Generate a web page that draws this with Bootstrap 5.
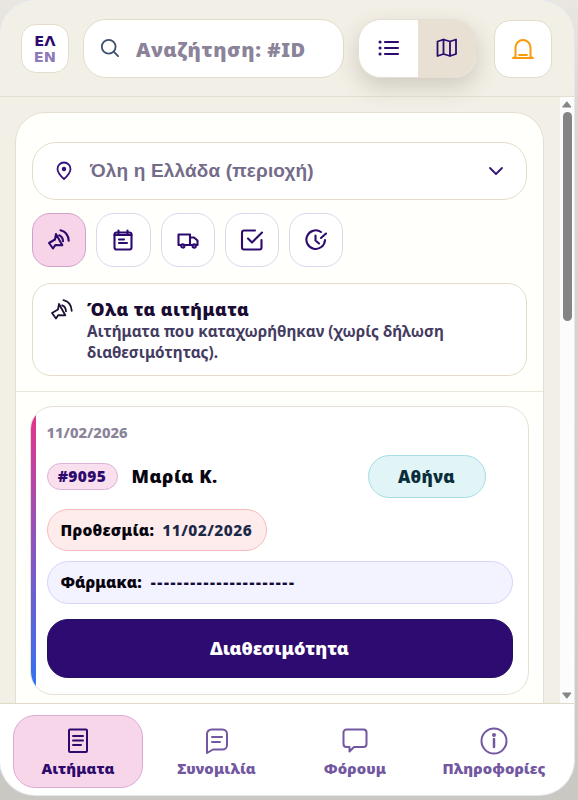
<!DOCTYPE html>
<html lang="el">
<head>
<meta charset="utf-8">
<meta name="viewport" content="width=device-width, initial-scale=1">
<title>Αιτήματα</title>
<link href="https://cdn.jsdelivr.net/npm/bootstrap@5.3.0/dist/css/bootstrap.min.css" rel="stylesheet">
<style>
*{box-sizing:border-box}
body{height:800px;width:578px;font-family:"Noto Sans","Open Sans",sans-serif;background:linear-gradient(180deg,#e9e7df 0,#dad8d0 14%,#d6d1cb 65%,#cac8c2 100%);color:#1c1038}
.shell{width:574px;height:795px;border-radius:35px;background:#f2efe6;overflow:hidden;box-shadow:0 0 0 1px #e3e7ee}
.topbar{height:97px;border-bottom:1px solid #e5dfd1;padding:0 22px 0 21px;flex:none}
.tile{background:#fff;border:1px solid #e3dccb}
.lang{width:48px;height:49px;border-radius:15px;font:700 14.6px/16px "DejaVu Sans",sans-serif;color:#2d0a6e;margin-right:14px;padding-top:1px}
.lang .off{color:#8e78b8}
.search{width:262px;height:59px;border-radius:23px;margin-right:14px;padding-left:16px;color:#3f4f70}
.search .hint{font-size:20px;font-weight:900;letter-spacing:.6px;color:#8b8399;margin:3px 0 0 16px}
.toggle{width:119px;height:59px;border-radius:23px;overflow:hidden;margin-right:17px;box-shadow:0 9px 22px rgba(70,60,40,.2);border:1px solid #e5dfd1;color:#2d0a6e}
.toggle div{flex:1}
.toggle .alt{background:#e7e0d3}
.bell{width:58px;height:58px;border-radius:16px;color:#f99a0c;margin-top:1px}
.main{height:606px;padding-left:15px;flex:none;overflow:hidden}
.panel{width:529px;height:620px;margin-top:15px;border:1px solid #e5dfd1;border-radius:30px 30px 0 0;background:#fffffc}
.upper{height:279px;padding:29px 16px 0;border-bottom:1px solid #ebe7dc}
.region{height:58px;border-radius:24px;padding:0 21px 0 21px;color:#37127a}
.region .label{font-family:"Liberation Sans",sans-serif;font-size:19px;font-weight:700;letter-spacing:.15px;color:#746c89;margin:1px 0 0 16px}
.filters{gap:10px;margin-top:13px}
.filter{width:54.3px;height:54px;border-radius:18px;border:1px solid #dcd7ec;background:#fff;color:#2d0a6e}
.filter.on{background:#f8d4e8;border-color:#cfa0cd}
.info{height:93px;margin-top:16px;border-radius:19px;padding:14px 17px}
.info .txt{margin-left:13px}
.info .ttl{font-size:17.5px;font-weight:900;letter-spacing:.45px;line-height:23px;color:#190b32}
.info .desc{font-size:15.3px;font-weight:700;line-height:20.5px;color:#443b61}
.request{width:499px;height:289px;margin:13.500px 0 0 14px;border-radius:23px;overflow:hidden;background:#fff;border:1px solid #e6e1d4}
.stripe{width:5px;flex:none;background:linear-gradient(#e93289,#9153bc 45%,#2c74f4)}
.content{padding:14px 15.500px 0 10.500px}
.date{font-size:14.8px;font-weight:800;color:#8b8399;line-height:22px}
.person{margin-top:12px;height:44px}
.num{width:71px;height:27px;border-radius:14px;background:#fae0ee;border:1px solid #dcb2d8;font-size:15.5px;font-weight:900;letter-spacing:.4px;color:#2d0a6e}
.who{font-size:18px;font-weight:900;letter-spacing:.5px;color:#080610;margin-left:14px}
.city{width:118px;height:43.500px;border-radius:22px;background:#e1f4f6;border:1px solid #a4dde4;font-size:17px;font-weight:900;letter-spacing:.3px;color:#092e3b;margin-left:auto;margin-right:27px}
.line{height:43px;border-radius:22px;padding:2px 14px 0 13px;font-size:15.5px;font-weight:900;white-space:pre;color:#07040d}
.due{width:220px;height:42px;margin-top:10px;background:#fdeceb;border:1px solid #f5bcbc}
.due .val{color:#1b2948;margin-left:8px;font-weight:800;letter-spacing:.5px}
.due .key{letter-spacing:.25px}
.meds{margin-top:10px;background:#f3f2ff;border:1px solid #d5d2fc}
.meds .val{margin-left:9px;letter-spacing:1.65px;color:#120a38}
.offer{height:59px;border-radius:21px;margin-top:15px;background:#2e0b70;color:#fff;font-size:18px;font-weight:900;border:1px solid #251064}
.scroll{width:14px;background:#fcfcfc;color:#848484}
.scroll .thumb{width:9px;height:209px;border-radius:5px;background:#848484;margin-top:4px}
.tabs{height:92px;background:#fff;border-top:1px solid #e0d9c8;padding:11px 0 0 13px}
.tab{height:73px;border-radius:22px;border:1px solid transparent;color:#7257a1;font-size:14.8px;font-weight:900;line-height:20px;padding-top:11px}
.tab span{letter-spacing:.1px}
.tab.on{background:#f8d6e9;border-color:#dca9d3;color:#2d0a6e}
.w131{width:130px}.w147{width:147px}.w130{width:130px}.w148{width:148px}
svg{flex:none;fill:none;stroke:currentColor;stroke-width:1.8;stroke-linecap:round;stroke-linejoin:round;display:block}
.tab svg{margin-bottom:3px;stroke-width:2}
.thick{stroke-width:2.1}
span,.ttl,.desc,.date{white-space:nowrap}
</style>
</head>
<body>
<svg width="0" height="0" class="position-absolute"><defs>
<g id="horn"><path d="M9 6 15.300 17.300 8.300 17.100 6 20.500 2 15 8 11.500Z"/><path d="M12.200 7.300q3.700 1.600 3.800 6M13.500 2.200q7.800 1.800 8.200 10.600"/></g>
</defs></svg>
<div class="shell d-flex flex-column">
  <header class="topbar d-flex align-items-center">
    <div class="tile lang d-flex flex-column align-items-center justify-content-center"><span>ΕΛ</span><span class="off">EN</span></div>
    <div class="tile search d-flex align-items-center"><svg width="20" height="20" viewBox="0 0 20 20"><circle cx="8.700" cy="8.700" r="6.900"/><path d="m13.700 13.700 4.400 4.400"/></svg><span class="hint">Αναζήτηση: #ID</span></div>
    <div class="toggle d-flex">
      <div class="bg-white d-flex align-items-center justify-content-center"><svg class="thick" width="22" height="20" viewBox="0 0 22 18"><path d="M7 3H20M7 9H20M7 15H20"/><path d="M2 3h.1M2 9h.1M2 15h.1" style="stroke-width:3"/></svg></div>
      <div class="alt d-flex align-items-center justify-content-center"><svg width="22" height="20" viewBox="0 0 22 19"><path d="m1.500 3 6-2 6.500 2 6-2v14.500l-6 2-6.500-2-6 2zM7.500 1v14.500M14 3v14.500"/></svg></div>
    </div>
    <div class="tile bell d-flex align-items-center justify-content-center"><svg width="24" height="22" viewBox="0 0 24 22"><path d="M4.500 18.500V9.500a7.500 7.500 0 0 1 15 0v9l2.500 1.500H2Z" style="stroke-width:2"/><path d="M8 17h8"/></svg></div>
  </header>
  <main class="main d-flex justify-content-between">
    <section class="panel">
      <div class="upper">
        <div class="tile region d-flex align-items-center"><svg width="20" height="22" viewBox="0 0 20 22"><path d="M10 19C6 15.500 3.500 12.500 3.500 9a6.500 6.500 0 0 1 13 0c0 3.500-2.500 6.500-6.500 10Z"/><circle cx="10" cy="9" r="1.300" fill="currentColor"/></svg><span class="label">Όλη η Ελλάδα (περιοχή)</span><svg class="ms-auto" width="18" height="18" viewBox="0 0 18 18"><path d="m3 6 6 6 6-6"/></svg></div>
        <div class="filters d-flex">
          <div class="filter on d-flex align-items-center justify-content-center"><svg class="thick" width="24" height="24" viewBox="0 0 24 24"><use href="#horn"/></svg></div>
          <div class="filter d-flex align-items-center justify-content-center"><svg class="thick" width="22" height="22" viewBox="0 0 22 22"><rect x="2.500" y="3.500" width="17" height="17" rx="2"/><path d="M2.500 6h17M6.500 1.500v3M15.500 1.500v3M7 10.500h5M7 14h8"/></svg></div>
          <div class="filter d-flex align-items-center justify-content-center"><svg class="thick" width="22" height="20" viewBox="0 0 22 20"><path d="M4 15H1.500V4.500H13V15H7.500M13 7.500h4l3.500 3V15H19M13 15h2.500"/><circle cx="5.800" cy="16" r="1.600"/><circle cx="17.200" cy="16" r="1.600"/></svg></div>
          <div class="filter d-flex align-items-center justify-content-center"><svg class="thick" width="24" height="22" viewBox="0 0 24 22"><path d="M15 1.500H4a2 2 0 0 0-2 2v15a2 2 0 0 0 2 2h15.500a2 2 0 0 0 2-2V11"/><path d="m8 9.500 4 4L22 3.500"/></svg></div>
          <div class="filter d-flex align-items-center justify-content-center"><svg class="thick" width="22" height="22" viewBox="0 0 22 22"><path d="M16 3A9.300 9.300 0 1 0 20 11M10.500 6.500v5l3.500 3M16 9l5-4.500"/></svg></div>
        </div>
        <div class="tile info d-flex"><svg width="24" height="24" viewBox="0 0 24 24"><use href="#horn"/></svg><div class="txt"><div class="ttl"><span>Όλα τα αιτήματα</span></div><div class="desc"><span>Αιτήματα που καταχωρήθηκαν (χωρίς δήλωση</span><br><span>διαθεσιμότητας).</span></div></div></div>
      </div>
      <article class="request d-flex">
        <div class="stripe"></div>
        <div class="content flex-grow-1">
          <div class="date"><span>11/02/2026</span></div>
          <div class="person d-flex align-items-center"><div class="num d-flex align-items-center justify-content-center"><span>#9095</span></div><span class="who">Μαρία Κ.</span><div class="city d-flex align-items-center justify-content-center"><span>Αθήνα</span></div></div>
          <div class="line due d-flex align-items-center"><span class="key">Προθεσμία:</span><span class="val">11/02/2026</span></div>
          <div class="line meds d-flex align-items-center"><span class="key">Φάρμακα:</span><span class="val">----------------------</span></div>
          <div class="offer d-flex align-items-center justify-content-center"><span>Διαθεσιμότητα</span></div>
        </div>
      </article>
    </section>
    <div class="scroll d-flex flex-column align-items-center"><svg width="10" height="7" viewBox="0 0 10 7" class="mt-1" style="fill:currentColor;stroke-width:1"><path d="m5 1 4 5H1z"/></svg><div class="thumb"></div><svg width="10" height="7" viewBox="0 0 10 7" class="mt-auto mb-1" style="fill:currentColor;stroke-width:1"><path d="m5 6 4-5H1z"/></svg></div>
  </main>
  <nav class="tabs d-flex">
    <div class="tab on w131 d-flex flex-column align-items-center"><svg width="26" height="28" viewBox="0 0 26 28"><rect x="4" y="2.500" width="18" height="22.500" rx="1"/><path d="M8 9h10M8 13.500h10M8 18h8"/></svg><span>Αιτήματα</span></div>
    <div class="tab w147 d-flex flex-column align-items-center"><svg width="26" height="28" viewBox="0 0 26 28"><path d="M3 26V7a4.500 4.500 0 0 1 4.500-4.500h11A4.500 4.500 0 0 1 23 7v11a4.500 4.500 0 0 1-4.500 4.500H9Z"/><path d="M8 10h10M8 15h8"/></svg><span>Συνομιλία</span></div>
    <div class="tab w130 d-flex flex-column align-items-center"><svg width="26" height="28" viewBox="0 0 26 28"><path d="M4.500 2.500h17a3 3 0 0 1 3 3v11.500a3 3 0 0 1-3 3H12l-4.500 4.500V20h-3a3 3 0 0 1-3-3V5.500a3 3 0 0 1 3-3Z"/></svg><span>Φόρουμ</span></div>
    <div class="tab w148 d-flex flex-column align-items-center"><svg width="28" height="28" viewBox="0 0 28 28"><circle cx="14" cy="14" r="12.500"/><path d="M14 12v8" style="stroke-width:2.500"/><circle cx="14" cy="8" r="1" fill="currentColor"/></svg><span>Πληροφορίες</span></div>
  </nav>
</div>
<script src="https://cdn.jsdelivr.net/npm/bootstrap@5.3.0/dist/js/bootstrap.bundle.min.js"></script>
</body>
</html>
